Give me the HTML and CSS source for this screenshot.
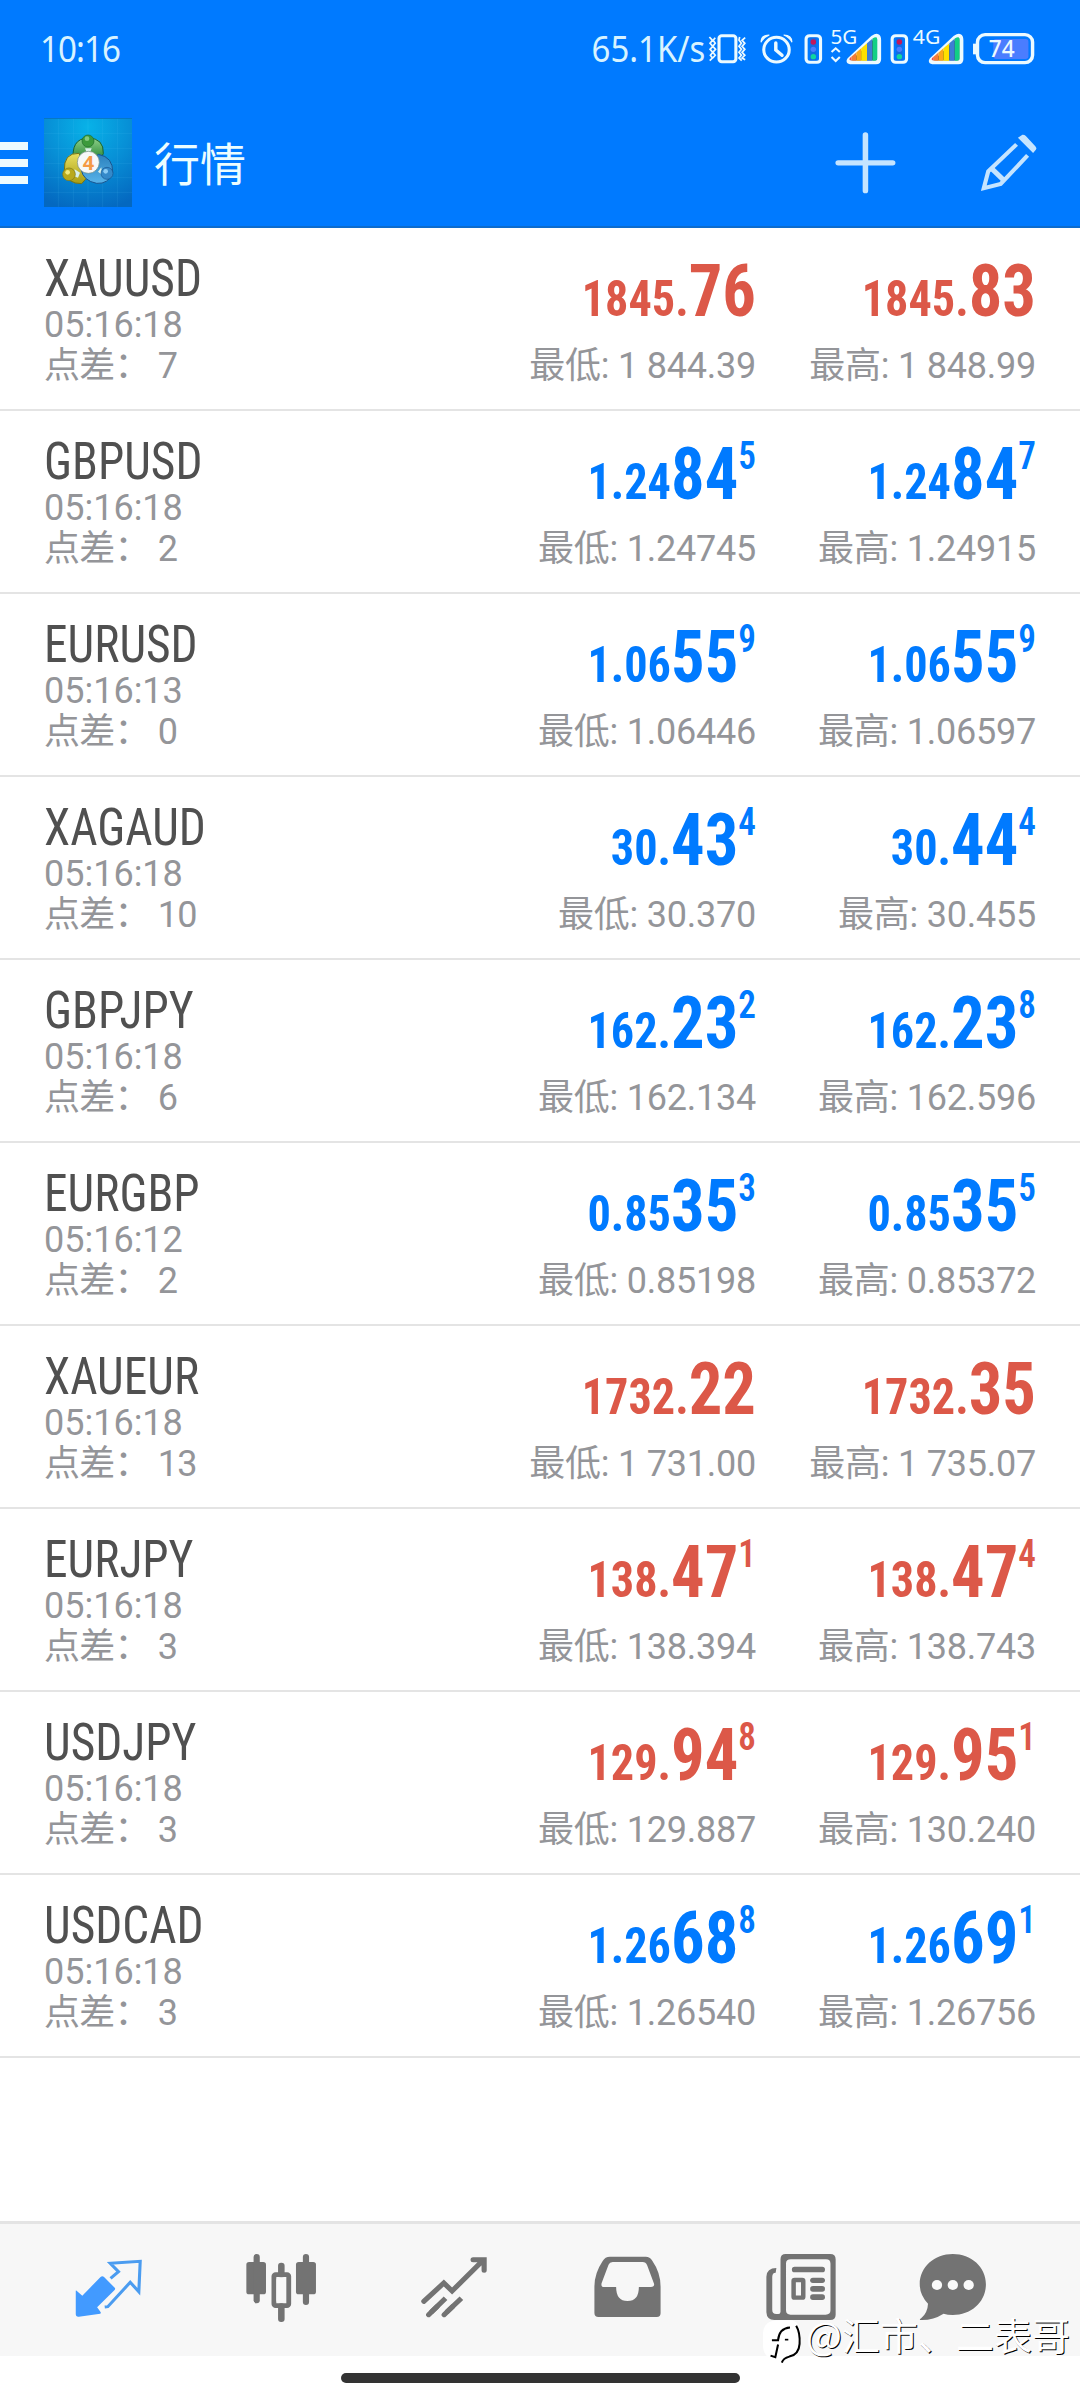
FILE: index.html
```html
<!DOCTYPE html>
<html lang="zh-CN">
<head>
<meta charset="utf-8">
<title>行情</title>
<link rel="stylesheet" href="styles.css">
</head>
<body>
<header class="top">
  <div class="status">
    <span class="clock">10:16</span>
    <span class="speed">65.1K/s</span>
    <svg class="status-icons" viewBox="487 50 953 150" preserveAspectRatio="none" fill="none" stroke="#ecfaff">
      <path d="M491 110l9 10-7 9 8 9-8 9 8 9-7 9 6 8-8 8M508 112l-6 8 6 9-7 9 8 9-8 9 7 9-7 8M579 110l-2 9 7 10-7 9 7 9-7 9 7 9-7 8 8 8M595 112l-9 8 8 9-8 9 8 9-8 9 8 9-8 8 9 5" stroke-width="5"/>
      <rect x="519" y="106" width="49" height="78" rx="8" stroke-width="9"/>
      <circle cx="686" cy="148" r="37" stroke-width="9"/>
      <path d="M684 128v21l18 16" stroke-width="10" stroke-linecap="round"/>
      <path d="M641 126q0-22 24-22q-17 7-24 22zM731 126q0-22-24-22q17 7 24 22z" fill="#ecfaff" stroke-width="3"/>
      <g id="sim">
        <rect x="772" y="106" width="42" height="80" rx="10" stroke-width="9"/>
        <rect x="784" y="112" width="18" height="68" fill="#1669e0" stroke="none"/>
        <circle cx="793" cy="125" r="8" fill="#c2185b" stroke="none"/>
        <circle cx="793" cy="147" r="8" fill="#4a7dff" stroke="none"/>
        <circle cx="793" cy="169" r="8" fill="#10d6a0" stroke="none"/>
      </g>
      <use href="#sim" x="250"/>
      <path d="M846 155l12-11 12 11M846 170l12 12 12-12" stroke-width="6"/>
      <g id="signal">
        <path d="M900 175l66-64q18-12 18 8v58q0 9-9 9h-70q-16 0-5-11z" stroke="#ecfaff" stroke-width="12" fill="#222"/>
        <clipPath id="tri"><path d="M900 172l66-58q13-8 13 6v53q0 8-8 8h-62q-16 0-9-9z"/></clipPath>
        <g clip-path="url(#tri)" stroke="none">
          <path fill="#ee5350" d="M890 100h14v90h-14z"/><path fill="#f57c35" d="M904 100h14v90h-14z"/>
          <path fill="#fba81c" d="M918 100h14v90h-14z"/><path fill="#ffe000" d="M932 100h17v90h-17z"/>
          <path fill="#3e7dd4" d="M949 100h16v90h-16z"/><path fill="#11cf85" d="M965 100h18v90h-18z"/>
        </g>
      </g>
      <use href="#signal" x="239"/>
      <rect x="1270" y="103" width="160" height="84" rx="22" stroke-width="10"/>
      <rect x="1257" y="130" width="13" height="32" fill="#ecfaff" stroke="none"/>
      <rect x="1316" y="116" width="102" height="60" rx="8" fill="#4a7dff" stroke="none"/>
      <g fill="#ecfaff" stroke="none" class="status-text">
        <text x="843" y="132" font-size="59" textLength="78" lengthAdjust="spacingAndGlyphs">5G</text>
        <text x="1082" y="132" font-size="59" textLength="80" lengthAdjust="spacingAndGlyphs">4G</text>
        <text x="1303" y="171" font-size="69" textLength="75" lengthAdjust="spacingAndGlyphs" class="level">74</text>
      </g>
    </svg>
  </div>
  <div class="toolbar">
    <div class="menu"><i></i><i></i><i></i></div>
    <svg class="logo" viewBox="42 51 264 267" preserveAspectRatio="none">
      <defs>
        <radialGradient id="sky" cx=".5" cy=".1" r=".95"><stop offset="0" stop-color="#08b2e8"/><stop offset=".5" stop-color="#078fd6"/><stop offset="1" stop-color="#0468c0"/></radialGradient>
        <linearGradient id="gr" x2="0" y2="1"><stop offset="0" stop-color="#8fd18a"/><stop offset="1" stop-color="#187a26"/></linearGradient>
        <linearGradient id="ye" x2="0" y2="1"><stop offset="0" stop-color="#e8df60"/><stop offset="1" stop-color="#a89c10"/></linearGradient>
        <linearGradient id="bl" x2="0" y2="1"><stop offset="0" stop-color="#2b80bd"/><stop offset="1" stop-color="#58b4ea"/></linearGradient>
      </defs>
      <path fill="url(#sky)" d="M42 51h264v267H42z"/>
      <path d="M85 51v267M130 51v267M174 51v267M218 51v267M262 51v267M42 98h264M42 143h264M42 187h264M42 230h264M42 274h264" stroke="#6bd0ff" stroke-opacity=".16" stroke-width="2" fill="none"/>
      <path d="M42 52h264" stroke="#0873bd" stroke-width="3"/>
      <path d="M131 185Q120 112 175 111Q222 112 220 158L205 185z" fill="url(#gr)" stroke="#17622f" stroke-width="3"/>
      <path d="M147 157Q100 155 103 210Q112 249 155 248L175 225z" fill="url(#ye)" stroke="#70731c" stroke-width="3"/>
      <path d="M205 160Q250 168 248 215Q235 250 200 247Q160 240 153 205z" fill="url(#bl)" stroke="#17548f" stroke-width="3"/>
      <path d="M134 205l16 10-6 15-14-5zM204 212l10-13 2 22zM165 142h20l-4 10h-12z" fill="#d8f0e8"/>
      <circle cx="174" cy="120" r="18" fill="#3c9a3c" stroke="#1d6b2a" stroke-width="2"/><circle cx="171" cy="113" r="7" fill="#83c97e"/>
      <circle cx="117" cy="220" r="19" fill="#b8a91c" stroke="#7a751d" stroke-width="2"/><circle cx="113" cy="214" r="7" fill="#f1e97c"/>
      <circle cx="231" cy="217" r="18" fill="#3589c9" stroke="#17548f" stroke-width="2"/><circle cx="227" cy="211" r="7" fill="#8cccf5"/>
      <circle cx="175" cy="184" r="33" fill="#f7f8f8" stroke="#6f8a80" stroke-width="2"/>
      <text x="158" y="206" class="four">4</text>
    </svg>
    <h1>行情</h1>
    <svg class="tool-icons" viewBox="850 385 600 200" preserveAspectRatio="none" fill="none" stroke="#c5e4ff">
      <path d="M944 403v166M865 486h158" stroke-width="16" stroke-linecap="round"/>
      <path d="M1382 431L1300 511L1287 562L1336 549L1414 464" stroke-width="12"/>
      <path d="M1306 499l42 42" stroke-width="15"/>
      <path d="M1386 411l13-9q5-1 10 4l28 31q5 6 1 10l-8 10z" fill="#c5e4ff" stroke="none"/>
    </svg>
  </div>
</header>
<main>
<section class="row down"><div class="info"><b>XAUUSD</b><p>05:16:18</p><p>点差： 7</p></div><div class="quote"><div class="price"><span>1845.</span><em>76</em></div><p>最低: 1 844.39</p></div><div class="quote"><div class="price"><span>1845.</span><em>83</em></div><p>最高: 1 848.99</p></div></section>
<section class="row"><div class="info"><b>GBPUSD</b><p>05:16:18</p><p>点差： 2</p></div><div class="quote"><div class="price"><span>1.24</span><em>84</em><sup>5</sup></div><p>最低: 1.24745</p></div><div class="quote"><div class="price"><span>1.24</span><em>84</em><sup>7</sup></div><p>最高: 1.24915</p></div></section>
<section class="row"><div class="info"><b>EURUSD</b><p>05:16:13</p><p>点差： 0</p></div><div class="quote"><div class="price"><span>1.06</span><em>55</em><sup>9</sup></div><p>最低: 1.06446</p></div><div class="quote"><div class="price"><span>1.06</span><em>55</em><sup>9</sup></div><p>最高: 1.06597</p></div></section>
<section class="row"><div class="info"><b>XAGAUD</b><p>05:16:18</p><p>点差： 10</p></div><div class="quote"><div class="price"><span>30.</span><em>43</em><sup>4</sup></div><p>最低: 30.370</p></div><div class="quote"><div class="price"><span>30.</span><em>44</em><sup>4</sup></div><p>最高: 30.455</p></div></section>
<section class="row"><div class="info"><b>GBPJPY</b><p>05:16:18</p><p>点差： 6</p></div><div class="quote"><div class="price"><span>162.</span><em>23</em><sup>2</sup></div><p>最低: 162.134</p></div><div class="quote"><div class="price"><span>162.</span><em>23</em><sup>8</sup></div><p>最高: 162.596</p></div></section>
<section class="row"><div class="info"><b>EURGBP</b><p>05:16:12</p><p>点差： 2</p></div><div class="quote"><div class="price"><span>0.85</span><em>35</em><sup>3</sup></div><p>最低: 0.85198</p></div><div class="quote"><div class="price"><span>0.85</span><em>35</em><sup>5</sup></div><p>最高: 0.85372</p></div></section>
<section class="row down"><div class="info"><b>XAUEUR</b><p>05:16:18</p><p>点差： 13</p></div><div class="quote"><div class="price"><span>1732.</span><em>22</em></div><p>最低: 1 731.00</p></div><div class="quote"><div class="price"><span>1732.</span><em>35</em></div><p>最高: 1 735.07</p></div></section>
<section class="row down"><div class="info"><b>EURJPY</b><p>05:16:18</p><p>点差： 3</p></div><div class="quote"><div class="price"><span>138.</span><em>47</em><sup>1</sup></div><p>最低: 138.394</p></div><div class="quote"><div class="price"><span>138.</span><em>47</em><sup>4</sup></div><p>最高: 138.743</p></div></section>
<section class="row down"><div class="info"><b>USDJPY</b><p>05:16:18</p><p>点差： 3</p></div><div class="quote"><div class="price"><span>129.</span><em>94</em><sup>8</sup></div><p>最低: 129.887</p></div><div class="quote"><div class="price"><span>129.</span><em>95</em><sup>1</sup></div><p>最高: 130.240</p></div></section>
<section class="row"><div class="info"><b>USDCAD</b><p>05:16:18</p><p>点差： 3</p></div><div class="quote"><div class="price"><span>1.26</span><em>68</em><sup>8</sup></div><p>最低: 1.26540</p></div><div class="quote"><div class="price"><span>1.26</span><em>69</em><sup>1</sup></div><p>最高: 1.26756</p></div></section>
</main>
<nav class="tabs">
  <svg viewBox="64 72 502 396" preserveAspectRatio="none"><path fill="#429aff" d="M220 272q2-1 4 2l15 13 53-56q5-5 10 0l31 32q3 4-1 8l-50 51 10 14q2 3-1 5l-62 9q-9 1-9-8z"/><path fill="none" stroke="#4b9cf0" stroke-width="9" d="M321 235l23-20-24-25 87-6-4 91-25-28-65 73-9 1"/></svg>
  <svg viewBox="566 72 502 396" preserveAspectRatio="none" fill="#737373"><rect x="715" y="186" width="57" height="97" rx="8"/><rect x="736" y="162" width="18" height="148" rx="9"/><rect x="859" y="186" width="58" height="97" rx="8"/><rect x="879" y="162" width="18" height="153" rx="9"/><rect x="807" y="188" width="19" height="45" rx="9"/><rect x="807" y="310" width="19" height="56" rx="9"/><rect x="795" y="224" width="43" height="93" rx="5" fill="none" stroke="#737373" stroke-width="14"/><rect x="802" y="232" width="28" height="77" rx="7" fill="#f7f7f7"/></svg>
  <svg viewBox="1069 72 502 396" preserveAspectRatio="none" fill="none" stroke="#737373" stroke-width="15"><path stroke-linecap="round" d="M1231 304l58-55 24 24 90-92M1374 179h32v32M1245 344l24-24M1290 344l24-24"/><path d="M1252 337l42-42M1297 337l43-42"/></svg>
  <svg viewBox="3 72 502 396" preserveAspectRatio="none" fill="#737373"><path fill-rule="evenodd" d="M203 170h104q12 0 18 11 25 37 25 79v80q0 11-11 11H170q-12 0-12-12v-80q0-39 24-76 7-13 21-13zM211 186q-9 0-12 8l-20 55q-3 12 7 12h35q0 42 33 42t33-42h35q11 0 9-10l-20-55q-4-10-13-10z"/></svg>
  <svg viewBox="505 72 502 396" preserveAspectRatio="none" fill="#737373"><path fill-rule="evenodd" d="M713 162h129q16 0 16 16v166q0 16-16 16H680q-22 0-23-23V230q1-26 29-26l-2 14q-10 0-10 13v98q0 13 12 13h6q6 0 6-7V178q0-16 15-16zM728 178q-14 0-14 12v141q0 13 13 13h102q14 0 14-13V191q0-13-13-13z"/><rect x="731" y="200" width="96" height="17" rx="8"/><rect x="784" y="233" width="43" height="16" rx="8"/><rect x="784" y="258" width="43" height="17" rx="8"/><rect x="784" y="283" width="43" height="17" rx="8"/><rect x="736" y="240" width="28" height="53" rx="3" fill="none" stroke="#737373" stroke-width="13"/></svg>
  <svg viewBox="1008 72 502 396" preserveAspectRatio="none" fill="#737373"><path d="M1199 162c53 0 96 38 96 91s-43 92-96 92q-15 0-27-4-30 20-66 19-6 0 1-5 19-17 20-44-24-26-24-58c0-53 43-91 96-91z"/><g fill="#fafafa"><circle cx="1153" cy="255" r="15"/><circle cx="1199" cy="255" r="15"/><circle cx="1245" cy="255" r="15"/></g></svg>
</nav>
<footer class="home"><i></i></footer>
<div class="watermark">
  <svg viewBox="645 355 120 140" preserveAspectRatio="none"><path fill="#fff" d="M690 362h38q29 2 29 42v30q0 30-24 39-20 5-25 14l-12-10q-46 4-48-38v-39q2-36 42-38z"/><path fill="none" stroke="#000" stroke-width="6" d="M727 383q-32 2-35 38h-18M692 434l-8 38-14-5M745 378q12 20 10 54-2 32-30 38-18 5-22 18"/><path d="M712 417h10v5h-10z"/></svg>
  <span>@汇市、二表哥</span>
</div>
</body>
</html>
```
FILE: styles.css
```css
* { box-sizing: border-box; }
body { margin: 0; width: 1080px; height: 2400px; overflow: hidden; background: #fff; font-family: Roboto, "Noto Sans CJK SC", sans-serif; position: relative; }
p, h1 { margin: 0; }
svg { display: block; flex: none; }
i { display: block; }

.top { height: 228px; background: #007aff; border-bottom: 2px solid #0d6ccd; }
.status { height: 98px; padding: 27px 44px 0 40px; display: flex; justify-content: space-between; color: #d8f3ff; font: 36px/44px "Noto Sans", sans-serif; }
.clock { margin-right: auto; letter-spacing: -1px; transform: scaleX(.92); transform-origin: left; }
.speed { margin-right: 3px; transform: scaleX(.915); transform-origin: right; }
.status-icons { width: 328px; height: 50px; margin-top: -10px; }
.status-text { font-family: "Noto Sans", sans-serif; }
.level { font-weight: 500; }
.toolbar { height: 128px; display: flex; align-items: center; }
.menu { width: 28px; margin-top: 2px; display: flex; flex-direction: column; gap: 9px; }
.menu i { height: 8px; background: #ecfaff; }
.logo { width: 88px; height: 89px; margin-left: 16px; }
.four { fill: #f59a45; font: 700 60px "Noto Sans", sans-serif; }
h1 { flex: 1; margin-left: 22px; padding-top: 5px; color: #ecfdff; font-size: 46px; font-weight: 400; line-height: 60px; }
.tool-icons { width: 207px; height: 67px; margin-right: 40px; }

.row { display: grid; grid-template-columns: 1fr 280px 280px; height: 183px; padding: 25px 44px 0 44px; border-bottom: 2px solid #e4e4e4; color: #949599; font-size: 36px; line-height: 41px; white-space: pre; }
.info b { display: block; color: #505050; font-size: 51px; line-height: 52px; font-weight: 400; font-family: "Roboto Condensed", Roboto, sans-serif; font-stretch: 75%; transform: scaleX(.93); transform-origin: left; }
.info p:last-child { letter-spacing: -.8px; }
.quote { text-align: right; }
.quote p { letter-spacing: -.22px; }
.price { height: 93px; color: #007aff; font: 700 72px/77px "Roboto Condensed", Roboto, sans-serif; font-stretch: 75%; transform: scaleX(.925); transform-origin: right; }
.down .price { color: #dc5848; }
.price em { font-style: normal; }
.price span { font-size: 50px; line-height: 1; }
.price sup { font-size: 38px; line-height: 0; vertical-align: 30px; font-weight: 600; }

.tabs { margin-top: 163px; height: 135px; display: flex; padding-left: 22px; background: #f7f7f7; border-top: 3px solid #e4e4e4; }
.tabs svg { width: 173px; height: 132px; }
.home { padding-top: 17px; }
.home i { width: 399px; height: 10px; border-radius: 5px; margin: 0 auto; background: #333; }
.watermark { position: absolute; left: 762px; top: 2318px; display: flex; color: #fff; }
.watermark svg { width: 41px; height: 47px; }
.watermark span { margin: -4px 0 0 3px; font: 38px/40px "Noto Sans CJK SC", sans-serif; text-shadow: 1px 1px 0 #000; white-space: nowrap; }
```
